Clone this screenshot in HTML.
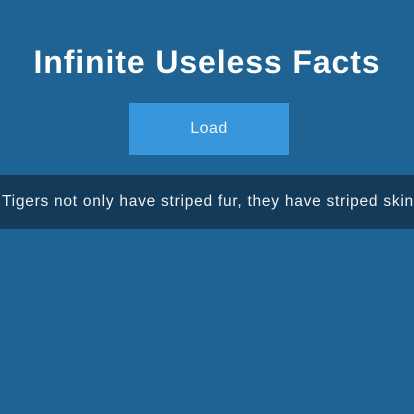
<!DOCTYPE html>
<html><head><style>
html,body{margin:0;padding:0;width:414px;height:414px;overflow:hidden;background:#1e6394;font-family:"Liberation Sans",sans-serif;}
h1{position:absolute;top:42px;left:0;width:414px;margin:0;text-align:center;color:#fff;font-size:32px;font-weight:bold;letter-spacing:0.9px;line-height:40px;}
.btn{position:absolute;left:129px;top:103px;width:160px;height:52px;background:#3897dc;color:#eef4fa;font-size:16px;text-align:center;line-height:52px;letter-spacing:0.5px;}
.band{position:absolute;left:0;top:175px;width:414px;height:54px;background:#133a58;}
.fact{position:absolute;left:2px;top:192px;white-space:nowrap;color:#eef0f2;font-size:15.5px;line-height:20px;letter-spacing:0.75px;}
</style></head><body>
<h1>Infinite Useless Facts</h1>
<div class="btn">Load</div>
<div class="band"></div>
<div class="fact">Tigers not only have striped fur, they have striped skin</div>
</body></html>
